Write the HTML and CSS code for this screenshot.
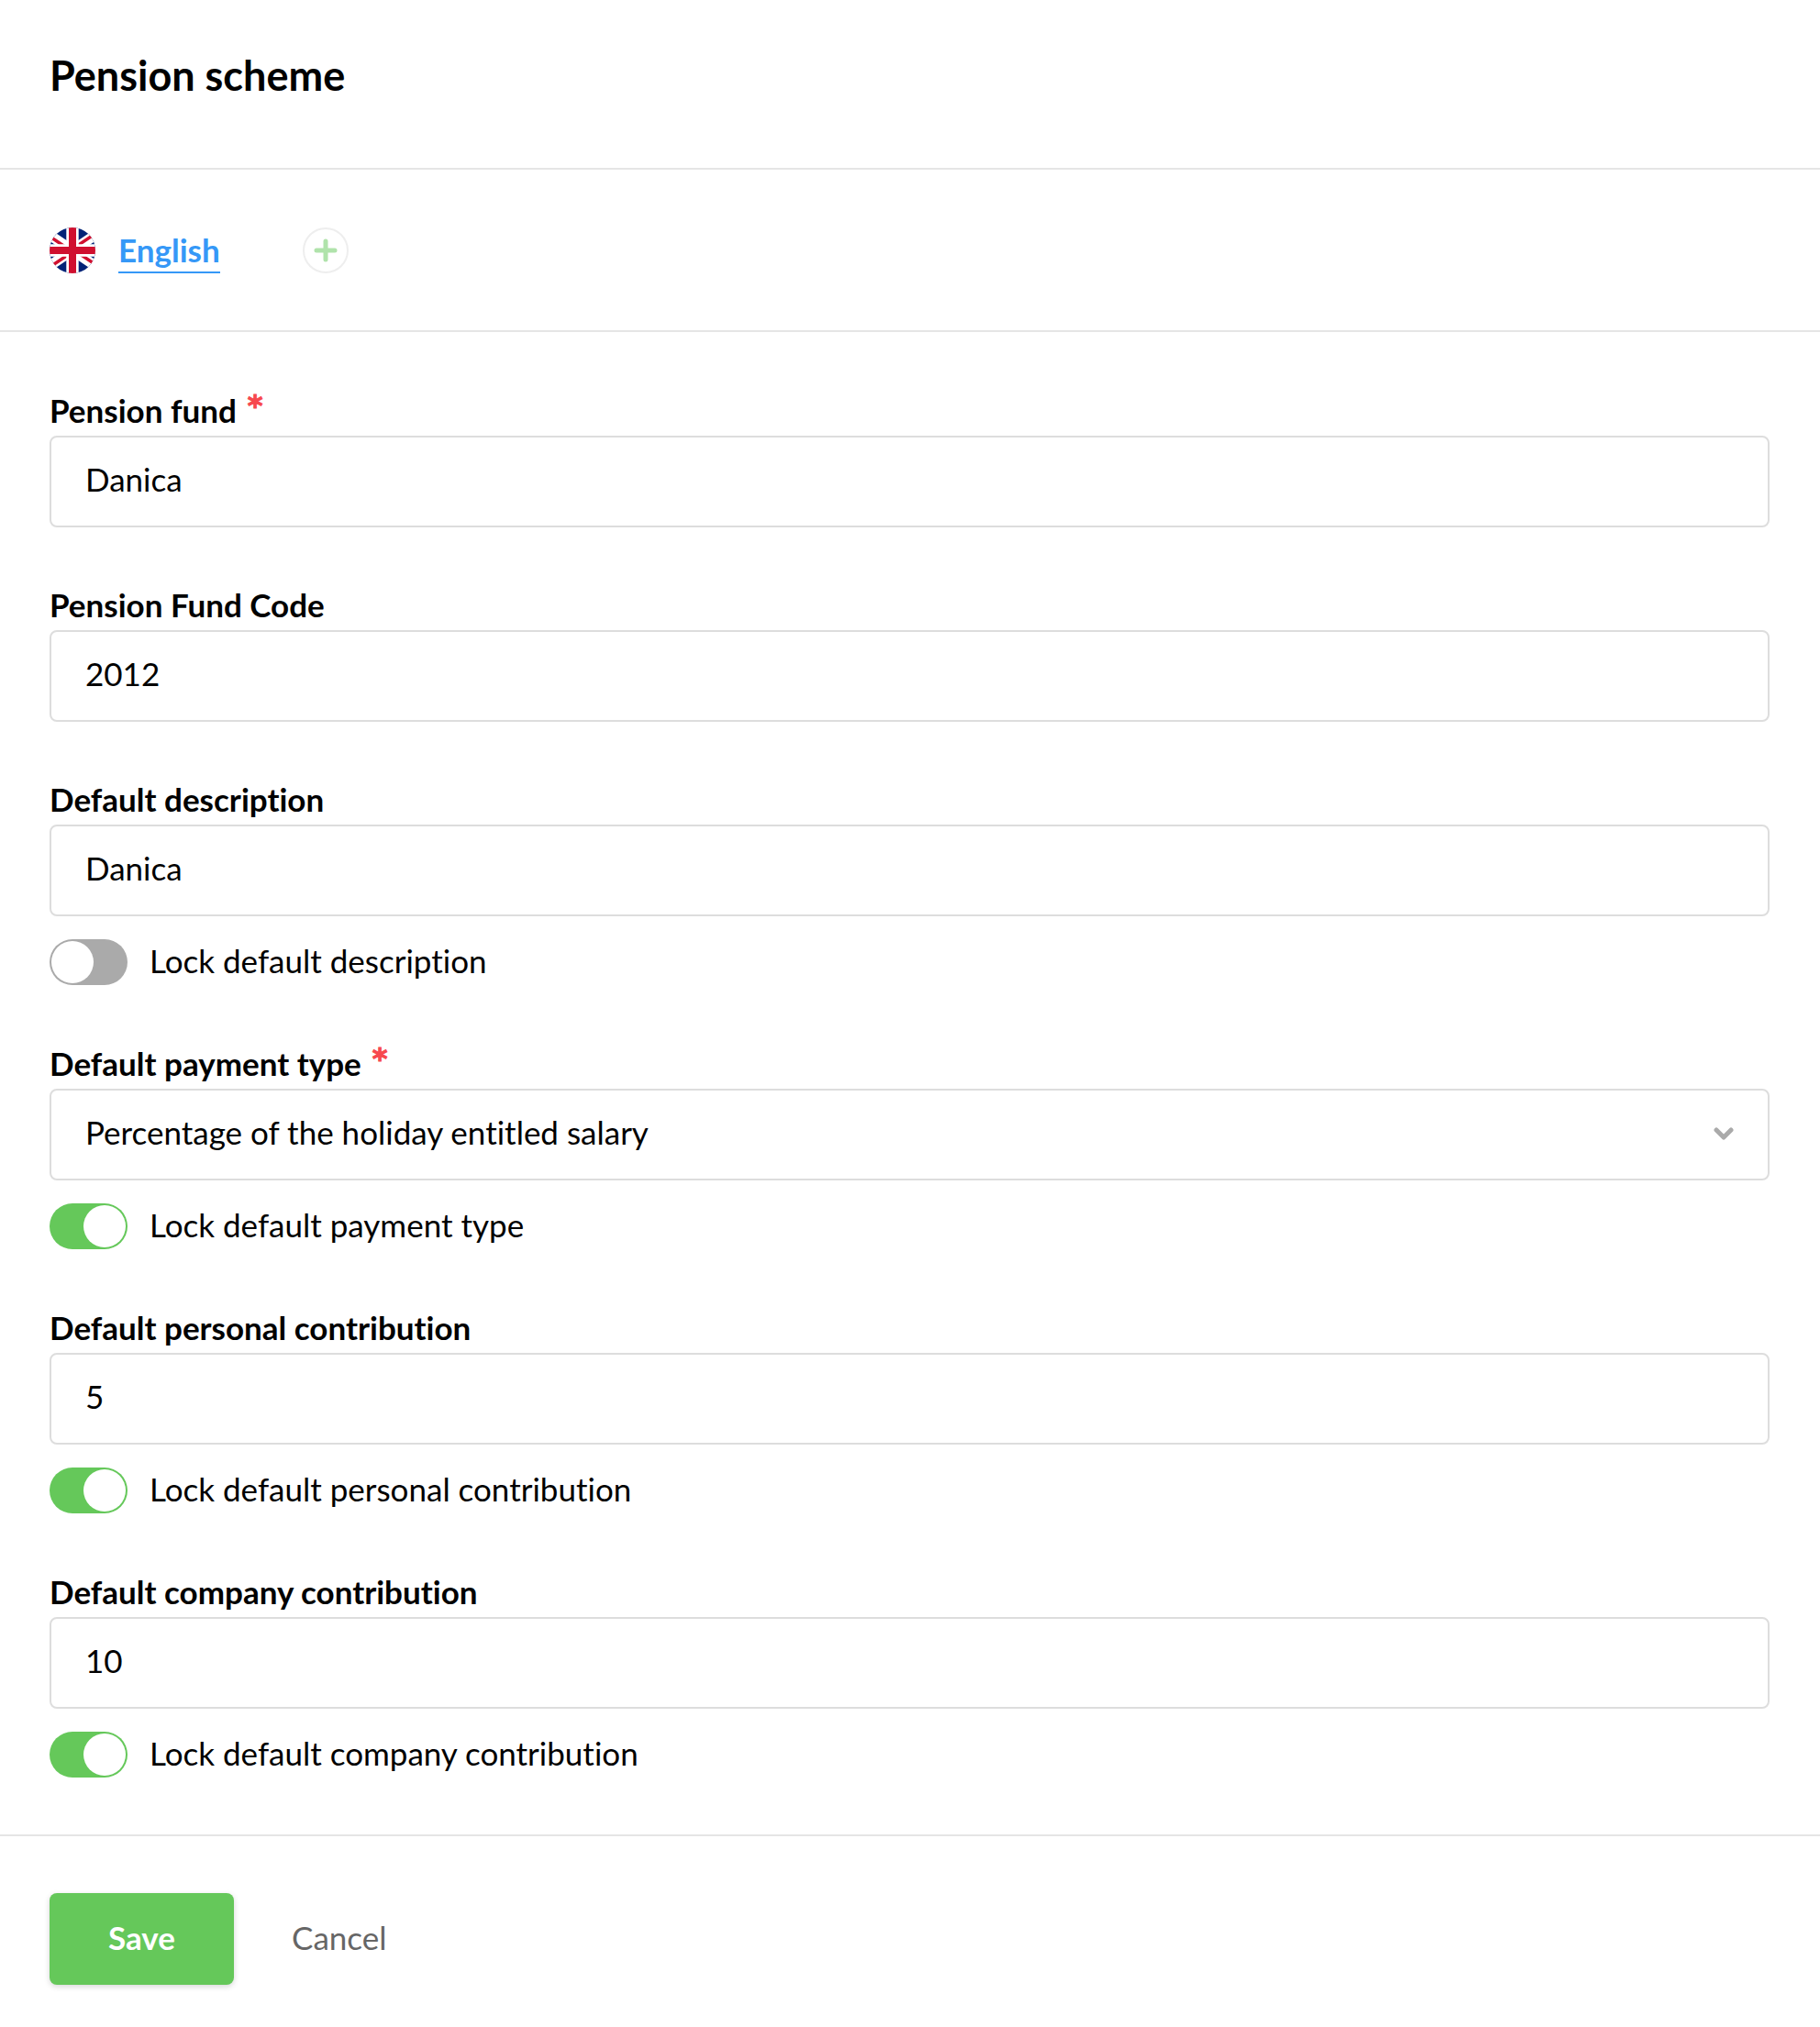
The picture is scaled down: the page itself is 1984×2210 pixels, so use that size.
FILE: index.html
```html
<!DOCTYPE html>
<html lang="en">
<head>
    <meta charset="UTF-8">
    <meta name="viewport" content="width=device-width, initial-scale=1.0">
    <title>Pension scheme</title>
    <link rel="stylesheet" href="styles.css">
</head>
<body>
    <header class="page-header">
        <h1>Pension scheme</h1>
    </header>

    <!-- Language switcher -->
    <nav class="languages">
        <a href="#english" class="language">
            <svg class="flag" viewBox="0 0 50 50" aria-hidden="true">
                <clipPath id="flag-circle"><circle cx="25" cy="25" r="25"/></clipPath>
                <g clip-path="url(#flag-circle)">
                    <path fill="#012377" d="M0 0h50v50H0z"/>
                    <path stroke="#fff" stroke-width="11" d="M-12 0L62 50M62 0L-12 50"/>
                    <path stroke="#d0102f" stroke-width="3.4" d="M-12 1.5L25 26.5M62 -1.5L25 23.5M-12 51.5L25 26.5M62 48.5L25 23.5"/>
                    <path fill="#fff" d="M18.3 0h13.4v50H18.3zM0 18.3h50v13.4H0z"/>
                    <path fill="#d0102f" d="M21 0h8v50h-8zM0 21h50v8H0z"/>
                </g>
            </svg>
            <span class="language-name">English</span>
        </a>
        <button type="button" class="add-language" aria-label="Add language">
            <svg viewBox="0 0 26 26" aria-hidden="true">
                <path d="M13 3v20M3 13h20"/>
            </svg>
        </button>
    </nav>

    <form>
        <div class="fields">
            <div class="field">
                <label class="field-label" for="fund">Pension fund <span class="required">*</span></label>
                <input class="control" type="text" id="fund" value="Danica" required>
            </div>

            <div class="field">
                <label class="field-label" for="fund-code">Pension Fund Code</label>
                <input class="control" type="text" id="fund-code" value="2012">
            </div>

            <div class="field">
                <label class="field-label" for="description">Default description</label>
                <input class="control" type="text" id="description" value="Danica">
                <label class="toggle">
                    <input type="checkbox" class="switch">
                    Lock default description
                </label>
            </div>

            <div class="field">
                <label class="field-label" for="payment-type">Default payment type <span class="required">*</span></label>
                <div class="select">
                    <select class="control" id="payment-type" required>
                        <option>Percentage of the holiday entitled salary</option>
                    </select>
                    <svg class="chevron" viewBox="0 0 22 14" aria-hidden="true">
                        <path d="M3 3l8 8 8-8"/>
                    </svg>
                </div>
                <label class="toggle">
                    <input type="checkbox" class="switch" checked>
                    Lock default payment type
                </label>
            </div>

            <div class="field">
                <label class="field-label" for="personal">Default personal contribution</label>
                <input class="control" type="text" id="personal" value="5">
                <label class="toggle">
                    <input type="checkbox" class="switch" checked>
                    Lock default personal contribution
                </label>
            </div>

            <div class="field">
                <label class="field-label" for="company">Default company contribution</label>
                <input class="control" type="text" id="company" value="10">
                <label class="toggle">
                    <input type="checkbox" class="switch" checked>
                    Lock default company contribution
                </label>
            </div>
        </div>

        <div class="actions">
            <button type="submit" class="save">Save</button>
            <button type="button" class="cancel">Cancel</button>
        </div>
    </form>
</body>
</html>
```

FILE: styles.css
```css
* {
    box-sizing: border-box;
}
body {
    margin: 0;
    background-color: #fff;
    color: #000;
    font-family: Lato, "Open Sans", sans-serif;
    font-size: 35px;
    font-variant-ligatures: none;
    line-height: 48px;
}
button, input, select {
    font: inherit;
    font-variant-ligatures: none;
    color: inherit;
}
.page-header {
    padding: 54px 54px 73px;
    border-bottom: 2px solid #e5e5e5;
}
.page-header h1 {
    margin: 0;
    font-size: 45px;
    font-weight: bold;
    line-height: 56px;
}
.languages {
    display: flex;
    align-items: center;
    gap: 90px;
    height: 177px;
    padding: 0 54px;
    border-bottom: 2px solid #e5e5e5;
}
.language {
    display: flex;
    align-items: center;
    gap: 25px;
    color: #3598f7;
    font-weight: bold;
    text-decoration: none;
}
.flag {
    width: 50px;
    height: 50px;
}
.language-name {
    border-bottom: 2px solid #3598f7;
}
.add-language {
    display: flex;
    align-items: center;
    justify-content: center;
    width: 50px;
    height: 50px;
    padding: 0;
    background: none;
    border: 2px solid #eee;
    border-radius: 50%;
    cursor: pointer;
}
.add-language svg {
    width: 26px;
    height: 26px;
    fill: none;
    stroke: #b0e3ab;
    stroke-width: 5;
    stroke-linecap: round;
}
.fields {
    display: flex;
    flex-direction: column;
    gap: 60px;
    padding: 61px 55px 61px 54px;
    border-bottom: 2px solid #e5e5e5;
}
.field-label {
    display: flex;
    gap: 12px;
    height: 52px;
    font-weight: bold;
}
.required {
    color: #f7484e;
    font-family: "DejaVu Sans", sans-serif;
    font-size: 32px;
    line-height: 38px;
    -webkit-text-stroke: 1px #f7484e;
}
.control {
    display: block;
    width: 100%;
    height: 100px;
    padding: 0 37px 6px;
    background-color: #fff;
    border: 2px solid #ddd;
    border-radius: 8px;
    appearance: none;
}
.select {
    position: relative;
}
.chevron {
    position: absolute;
    top: 42px;
    right: 39px;
    width: 22px;
    height: 14px;
    fill: none;
    stroke: #aaa;
    stroke-width: 5;
    stroke-linecap: round;
    stroke-linejoin: round;
    pointer-events: none;
}
.toggle {
    display: flex;
    align-items: flex-start;
    gap: 24px;
    height: 51px;
    margin-top: 25px;
    line-height: 46px;
}
.switch {
    display: flex;
    width: 85px;
    height: 50px;
    margin: 0;
    padding: 2px;
    background-color: #aaa;
    border-radius: 25px;
    appearance: none;
    cursor: pointer;
}
.switch::before {
    content: "";
    width: 46px;
    height: 46px;
    background-color: #fff;
    border-radius: 50%;
}
.switch:checked {
    justify-content: flex-end;
    background-color: #65c85a;
}
.actions {
    display: flex;
    gap: 63px;
    padding: 62px 54px 44px;
}
.save, .cancel {
    height: 100px;
    padding: 0 0 4px;
    background: none;
    border: none;
    cursor: pointer;
}
.save {
    width: 201px;
    background-color: #65c85a;
    border-radius: 8px;
    box-shadow: 0 2px 6px rgba(0, 0, 0, 0.16);
    color: #fff;
    font-weight: bold;
}
.cancel {
    color: #666;
}
```
